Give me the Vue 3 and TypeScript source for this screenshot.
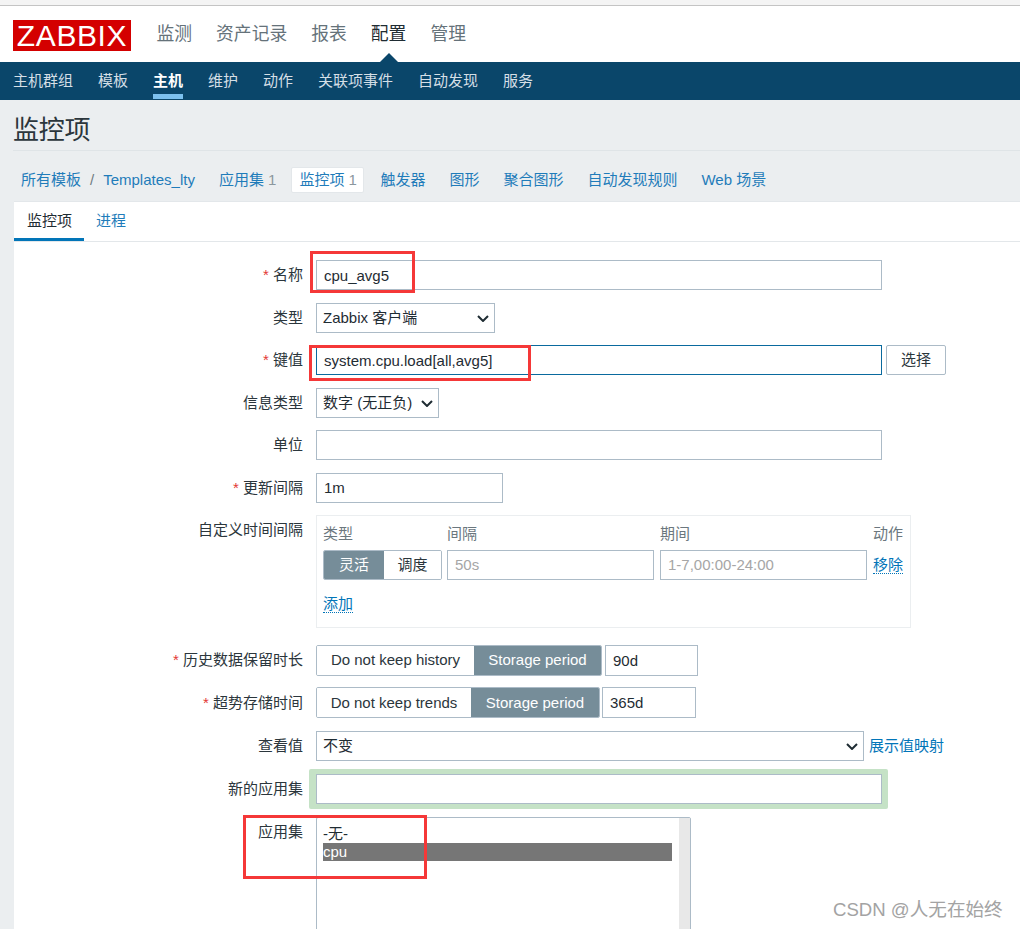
<script setup lang="ts">
import { ref } from 'vue'

const topMenu = ['监测', '资产记录', '报表', '配置', '管理']
const subMenu = ['主机群组', '模板', '主机', '维护', '动作', '关联项事件', '自动发现', '服务']

const name = ref('cpu_avg5')
const key = ref('system.cpu.load[all,avg5]')
const delay = ref('1m')
const history = ref('90d')
const trends = ref('365d')
</script>

<template>
  <div class="page">
    <div class="top-strip"></div>
    <header class="header">
      <div class="logo">ZABBIX</div>
      <nav class="top-menu">
        <a v-for="m in topMenu" :key="m" :class="{ active: m === '配置' }">{{ m }}</a>
      </nav>
    </header>
    <nav class="sub-menu">
      <a v-for="m in subMenu" :key="m" :class="{ active: m === '主机' }">{{ m }}</a>
    </nav>

    <h1 class="title">监控项</h1>

    <div class="crumbs">
      <a class="c-all">所有模板</a>
      <span class="slash">/</span>
      <a class="c-tpl">Templates_lty</a>
      <a class="c-app">应用集 <i>1</i></a>
      <a class="c-current">监控项 <i>1</i></a>
      <a class="c-trig">触发器</a>
      <a class="c-graph">图形</a>
      <a class="c-screen">聚合图形</a>
      <a class="c-disc">自动发现规则</a>
      <a>Web 场景</a>
    </div>

    <section class="card">
      <div class="tabs">
        <a class="tab on">监控项</a>
        <a class="tab">进程</a>
      </div>

      <div class="form">
        <div class="row">
          <label class="req">名称</label>
          <input class="wide" v-model="name" />
        </div>
        <div class="row">
          <label>类型</label>
          <span class="sel sel-type">
            <select><option>Zabbix 客户端</option></select>
            <svg viewBox="0 0 12 7" width="12" height="7"><path d="M1 1l5 5 5-5" /></svg>
          </span>
        </div>
        <div class="row key-row">
          <label class="req">键值</label>
          <input class="wide focus" v-model="key" />
          <button class="btn">选择</button>
        </div>
        <div class="row">
          <label>信息类型</label>
          <span class="sel sel-info">
            <select><option>数字 (无正负)</option></select>
            <svg viewBox="0 0 12 7" width="12" height="7"><path d="M1 1l5 5 5-5" /></svg>
          </span>
        </div>
        <div class="row">
          <label>单位</label>
          <input class="wide" />
        </div>
        <div class="row">
          <label class="req">更新间隔</label>
          <input class="delay" v-model="delay" />
        </div>

        <div class="row tall">
          <label class="top">自定义时间间隔</label>
          <div class="intervals">
            <div class="i-head">
              <span class="h1">类型</span>
              <span class="h2">间隔</span>
              <span class="h3">期间</span>
              <span>动作</span>
            </div>
            <div class="i-row">
              <div class="toggle small">
                <span class="t-on">灵活</span>
                <span class="t-off">调度</span>
              </div>
              <input class="i-input" placeholder="50s" />
              <input class="i-input" placeholder="1-7,00:00-24:00" />
              <a class="dotted">移除</a>
            </div>
            <a class="dotted add">添加</a>
          </div>
        </div>

        <div class="row hist-row">
          <label class="req">历史数据保留时长</label>
          <div class="toggle hist">
            <span class="t-off">Do not keep history</span>
            <span class="t-on">Storage period</span>
          </div>
          <input class="period p-hist" v-model="history" />
        </div>
        <div class="row">
          <label class="req">超势存储时间</label>
          <div class="toggle trend">
            <span class="t-off">Do not keep trends</span>
            <span class="t-on">Storage period</span>
          </div>
          <input class="period p-trend" v-model="trends" />
        </div>
        <div class="row view-row">
          <label>查看值</label>
          <span class="sel sel-view">
            <select><option>不变</option></select>
            <svg viewBox="0 0 12 7" width="12" height="7"><path d="M1 1l5 5 5-5" /></svg>
          </span>
          <a class="map-link">展示值映射</a>
        </div>
        <div class="row new-row">
          <label>新的应用集</label>
          <div class="green"><input class="wide" /></div>
        </div>
        <div class="row list-row">
          <label class="top">应用集</label>
          <div class="listbox">
            <div class="items">
              <div>-无-</div>
              <div class="picked">cpu</div>
            </div>
            <div class="track"></div>
          </div>
        </div>
      </div>
    </section>

    <!-- annotations drawn over the screenshot -->
    <div class="mark m1"></div>
    <div class="mark m2"></div>
    <div class="mark m3"></div>
    <div class="watermark">CSDN @人无在始终</div>
  </div>
</template>

<style>
html, body { margin: 0; overflow: hidden; }
</style>

<style scoped>
.page {
  position: relative;
  width: 1020px;
  height: 929px;
  overflow: hidden;
  background: #ebeef0;
  color: #1f2c33;
  font: 15px/18px "Liberation Sans", "Noto Sans CJK SC", sans-serif;
}

.top-strip {
  height: 5px;
  background: #f4f4f4;
  border-bottom: 1px solid #c4c4c4;
}

.header {
  height: 56px;
  background: #fff;
  display: flex;
  align-items: flex-start;
  padding-left: 13px;
}

.logo {
  width: 118px;
  height: 31px;
  margin-top: 14px;
  background: #d40000;
  color: #fff;
  font-size: 30px;
  line-height: 31px;
  text-align: center;
  letter-spacing: 0.6px;
}

.top-menu {
  display: flex;
  gap: 24px;
  margin-left: 25.5px;
  margin-top: 17px;
  position: relative;
}

.top-menu a {
  position: relative;
  font-size: 17.8px;
  line-height: 22px;
  color: #65727a;
}

.top-menu a.active { color: #1f2c33; }

.top-menu a.active::after {
  content: "";
  position: absolute;
  left: 9px;
  top: 30px;
  border: 9px solid transparent;
  border-top: 0;
  border-bottom-color: #0a466a;
}

.sub-menu {
  height: 38px;
  background: #0a466a;
  display: flex;
  gap: 25px;
  padding-left: 13px;
}

.sub-menu a {
  position: relative;
  line-height: 37px;
  color: #d5dfe6;
}

.sub-menu a.active { color: #fff; font-weight: bold; }

.sub-menu a.active::after {
  content: "";
  position: absolute;
  left: 0;
  right: 0;
  bottom: 1px;
  height: 5px;
  background: #7cc0ee;
}

.title {
  margin: 0 0 0 13px;
  height: 50px;
  border-bottom: 1px solid #dfe4e7;
  font-size: 26px;
  font-weight: normal;
  line-height: 60px;
  letter-spacing: -0.3px;
  color: #2b363c;
}

.crumbs {
  display: flex;
  align-items: center;
  height: 50px;
  padding-left: 21px;
  padding-top: 8px;
  box-sizing: border-box;
  color: #1f7cba;
}

.crumbs i { font-style: normal; color: #8b979e; }
.slash { color: #6f7b82; margin: 0 9px 0 9px; }
.c-app { margin-left: 24px; }
.c-current {
  margin-left: 15px;
  padding: 3px 7px;
  width: 73px;
  height: 26px;
  box-sizing: border-box;
  background: #fff;
  border: 1px solid #e3e7ea;
  border-radius: 2px;
  white-space: nowrap;
}
.c-trig { margin-left: 16px; }
.c-graph { margin-left: 24px; }
.c-screen { margin-left: 24px; }
.c-disc { margin-left: 24px; }
.crumbs a:last-child { margin-left: 24px; }

.card {
  margin-left: 14px;
  background: #fff;
  border-top: 1px solid #e3e7ea;
  height: 740px;
}

.tabs {
  display: flex;
  height: 39px;
  border-bottom: 1px solid #e3e7ea;
  box-sizing: content-box;
}

.tab {
  padding: 0 12px;
  line-height: 37px;
  color: #1f7cba;
}

.tab.on {
  color: #1f2c33;
  padding-left: 13px;
  border-bottom: 3px solid #0275b8;
  height: 36px;
}

.form {
  padding-top: 18px;
  display: flex;
  flex-direction: column;
  gap: 12.6px;
}

.row {
  display: flex;
  align-items: center;
  height: 30px;
  gap: 13px;
}

.row.tall { height: 113px; align-items: flex-start; margin-top: -1px; }
.row.hist-row { margin-top: 5px; }
.row.key-row { gap: 0; }
.row.key-row label { margin-right: 13px; }
.row.view-row { gap: 0; margin-top: 1px; }
.row.view-row label { margin-right: 13px; }

.row label {
  width: 289px;
  flex: none;
  text-align: right;
  color: #2b363c;
}

.row label.top { align-self: flex-start; padding-top: 6px; }
.row label.req::before { content: "* "; color: #e33734; }

input, select {
  box-sizing: border-box;
  height: 30px;
  border: 1px solid #acbbc7;
  background: #fff;
  color: #1f2c33;
  font: inherit;
  outline: none;
  border-radius: 0;
  padding: 0 7px;
}

input::placeholder { color: #a6a6a6; opacity: 1; }

.sel { position: relative; display: block; height: 30px; flex: none; }
.sel select { appearance: none; width: 100%; padding: 0 6px; display: block; }
.sel svg { position: absolute; right: 6px; top: 12px; pointer-events: none; }
.sel path { fill: none; stroke: #1f2c33; stroke-width: 2; }

.wide { width: 566px; }
.focus { border-color: #0a6a9e; }
.sel-type { width: 179px; }
.sel-info { width: 123px; }
.sel-view { width: 548px; }
.delay { width: 187px; }

.btn {
  box-sizing: border-box;
  margin-left: 4px;
  width: 60px;
  height: 30px;
  background: #fff;
  border: 1px solid #acbbc7;
  border-radius: 2px;
  color: #2b363c;
  font: inherit;
  padding: 0;
}

.intervals {
  box-sizing: border-box;
  width: 595px;
  height: 113px;
  border: 1px solid #ebeef0;
  padding: 7px 6px;
  font-size: 15px;
}

.i-head {
  display: flex;
  color: #6b777e;
  height: 27px;
  padding-top: 2px;
  box-sizing: border-box;
}

.h1 { width: 124px; }
.h2 { width: 213px; }
.h3 { width: 213px; }

.i-row { display: flex; align-items: center; gap: 6px; }
.i-input { width: 207px; }

.toggle {
  box-sizing: border-box;
  display: flex;
  height: 31px;
  border: 1px solid #acbbc7;
  border-radius: 2px;
  overflow: hidden;
  flex: none;
}

.toggle span {
  display: flex;
  align-items: center;
  justify-content: center;
}

.t-on { background: #768d99; color: #fff; }
.t-off { background: #fff; color: #2b363c; }

.small { width: 119px; height: 30px; margin-right: -1px; border-color: #acbbc7; }
.small .t-on { width: 60px; }
.small .t-off { flex: 1; }

.hist { width: 286px; }
.hist .t-off { width: 157px; }
.hist .t-on { flex: 1; }
.trend { width: 284px; }
.trend .t-off { width: 154px; }
.trend .t-on { flex: 1; }

.period { height: 31px; }
.row .p-hist { width: 93px; margin-left: -10px; }
.row .p-trend { width: 94px; margin-left: -11px; }

.dotted {
  color: #0275b8;
  border-bottom: 1px dotted #0275b8;
  line-height: 17px;
}

.add {
  display: inline-block;
  margin-top: 15px;
}

.map-link { color: #0275b8; margin-left: 5px; }

.new-row { margin-top: -5px; height: 40px; }

.green {
  box-sizing: border-box;
  margin-left: -7px;
  width: 579px;
  height: 40px;
  padding: 5px 6px 5px 7px;
  background: #c5e2c6;
  border-radius: 2px;
}

.green input { display: block; height: 30px; }

.list-row { height: 200px; align-items: flex-start; margin-top: -5px; }

.listbox {
  box-sizing: border-box;
  position: relative;
  display: flex;
  justify-content: space-between;
  width: 375px;
  height: 200px;
  border: 1px solid #acbbc7;
  border-radius: 2px 2px 0 0;
  line-height: 18px;
}

.items { width: 349px; margin: 7px 0 0 6px; }
.picked { background: #767676; color: #fff; }
.track { width: 11px; background: #e8e8e8; }

.mark {
  position: absolute;
  box-sizing: border-box;
  border: 3px solid #f53838;
}
.m1 { left: 310px; top: 251px; width: 105px; height: 42px; }
.m2 { left: 309px; top: 345px; width: 222px; height: 36px; }
.m3 { left: 243px; top: 815px; width: 184px; height: 64px; }

.watermark {
  position: absolute;
  left: 833px;
  top: 899px;
  font-size: 18.6px;
  line-height: 22px;
  color: #a3a3a3;
  white-space: nowrap;
}
</style>
